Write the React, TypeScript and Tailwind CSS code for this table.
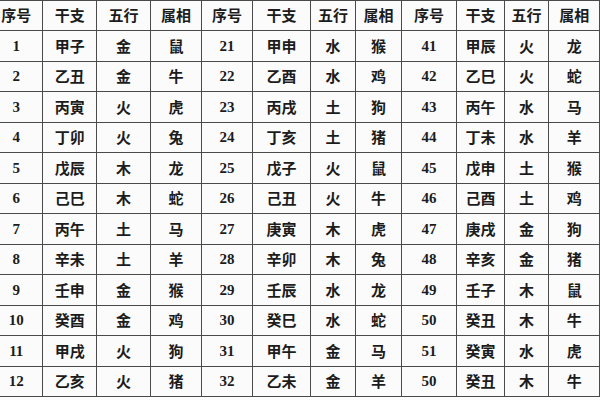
const widths = [54, 54, 55, 51, 52, 58, 46, 46, 56, 48, 45, 51]

const headers = ['序号', '干支', '五行', '属相']

const groups: string[][][] = [
  [
    ['1', '甲子', '金', '鼠'],
    ['2', '乙丑', '金', '牛'],
    ['3', '丙寅', '火', '虎'],
    ['4', '丁卯', '火', '兔'],
    ['5', '戊辰', '木', '龙'],
    ['6', '己巳', '木', '蛇'],
    ['7', '丙午', '土', '马'],
    ['8', '辛未', '土', '羊'],
    ['9', '壬申', '金', '猴'],
    ['10', '癸酉', '金', '鸡'],
    ['11', '甲戌', '火', '狗'],
    ['12', '乙亥', '火', '猪'],
  ],
  [
    ['21', '甲申', '水', '猴'],
    ['22', '乙酉', '水', '鸡'],
    ['23', '丙戌', '土', '狗'],
    ['24', '丁亥', '土', '猪'],
    ['25', '戊子', '火', '鼠'],
    ['26', '己丑', '火', '牛'],
    ['27', '庚寅', '木', '虎'],
    ['28', '辛卯', '木', '兔'],
    ['29', '壬辰', '水', '龙'],
    ['30', '癸巳', '水', '蛇'],
    ['31', '甲午', '金', '马'],
    ['32', '乙未', '金', '羊'],
  ],
  [
    ['41', '甲辰', '火', '龙'],
    ['42', '乙巳', '火', '蛇'],
    ['43', '丙午', '水', '马'],
    ['44', '丁未', '水', '羊'],
    ['45', '戊申', '土', '猴'],
    ['46', '己酉', '土', '鸡'],
    ['47', '庚戌', '金', '狗'],
    ['48', '辛亥', '金', '猪'],
    ['49', '壬子', '木', '鼠'],
    ['50', '癸丑', '木', '牛'],
    ['51', '癸寅', '水', '虎'],
    ['50', '癸丑', '木', '牛'],
  ],
]

const cjk = "font-['Noto_Sans_CJK_SC',sans-serif]"
const num = "font-['Liberation_Serif',serif]"

export default function App() {
  // one table row = row i of each of the three groups side by side
  const rows = groups[0].map((_, i) => groups.flatMap((g) => g[i]))

  return (
    <div className="w-[600px] h-[400px] overflow-hidden bg-[#fbfbfb]">
      <table className="ml-[-11px] border-collapse table-fixed text-[#1c1c1c]">
        <colgroup>
          {widths.map((w, i) => (
            <col key={i} style={{ width: w }} />
          ))}
        </colgroup>
        <thead>
          <tr className="h-[30px]">
            {[0, 1, 2].flatMap((g) =>
              headers.map((h) => (
                <th
                  key={`${g}-${h}`}
                  className={`border border-[#4a4a4a] p-0 text-center text-[15px] font-bold ${cjk}`}
                >
                  {h}
                </th>
              ))
            )}
          </tr>
        </thead>
        <tbody>
          {rows.map((cells, r) => (
            <tr key={r} className="h-[30.5px]">
              {cells.map((c, i) => (
                <td
                  key={i}
                  className={`border border-[#4a4a4a] p-0 text-center ${
                    i % 4 === 0
                      ? `${num} text-[15px] font-bold`
                      : `${cjk} text-[15px] font-bold`
                  }`}
                >
                  {c}
                </td>
              ))}
            </tr>
          ))}
        </tbody>
      </table>
    </div>
  )
}
